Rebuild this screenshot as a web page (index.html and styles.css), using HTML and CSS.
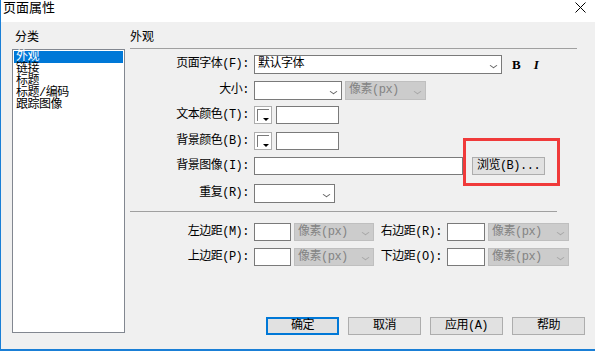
FILE: index.html
```html
<!DOCTYPE html>
<html lang="zh-CN">
<head>
    <meta charset="UTF-8">
    <title>页面属性</title>
    <link rel="stylesheet" href="styles.css">
</head>
<body>
    <div class="window">
        <div class="titlebar">
            <span class="title">页面属性</span>
            <svg class="close" width="11" height="11" viewBox="0 0 11 11">
                <path d="M0.5 0.5 L10.5 10.5 M10.5 0.5 L0.5 10.5" stroke="#000" stroke-width="1"/>
            </svg>
        </div>

        <div class="content">
            <div class="sidebar">
                <div class="heading">分类</div>
                <ul class="list">
                    <li class="selected">外观</li>
                    <li>链接</li>
                    <li>标题</li>
                    <li>标题/编码</li>
                    <li>跟踪图像</li>
                </ul>
            </div>

            <div class="panel">
                <div class="heading">外观</div>
                <div class="rule rule-top"></div>

                <div class="form">
                    <label>页面字体(F):</label>
                    <div class="row">
                        <div class="select font-select">默认字体<span class="arrow"></span></div>
                        <span class="bold">B</span>
                        <span class="italic">I</span>
                    </div>

                    <label>大小:</label>
                    <div class="row">
                        <div class="select size-select"><span class="arrow"></span></div>
                        <div class="select disabled unit-select">像素(px)<span class="arrow"></span></div>
                    </div>

                    <label>文本颜色(T):</label>
                    <div class="row">
                        <span class="swatch"><span class="tri"></span></span>
                        <input type="text" class="color-input">
                    </div>

                    <label>背景颜色(B):</label>
                    <div class="row">
                        <span class="swatch"><span class="tri"></span></span>
                        <input type="text" class="color-input">
                    </div>

                    <label>背景图像(I):</label>
                    <div class="row">
                        <input type="text" class="image-input">
                        <div class="browse-wrap">
                            <button class="btn browse">浏览(B)...</button>
                        </div>
                    </div>

                    <label>重复(R):</label>
                    <div class="row">
                        <div class="select repeat-select"><span class="arrow"></span></div>
                    </div>
                </div>

                <div class="rule rule-mid"></div>

                <div class="margins">
                    <label>左边距(M):</label>
                    <input type="text" class="margin-input">
                    <div class="select disabled">像素(px)<span class="arrow"></span></div>
                    <label>右边距(R):</label>
                    <input type="text" class="margin-input">
                    <div class="select disabled">像素(px)<span class="arrow"></span></div>

                    <label>上边距(P):</label>
                    <input type="text" class="margin-input">
                    <div class="select disabled">像素(px)<span class="arrow"></span></div>
                    <label>下边距(O):</label>
                    <input type="text" class="margin-input">
                    <div class="select disabled">像素(px)<span class="arrow"></span></div>
                </div>

                <div class="buttons">
                    <button class="btn default">确定</button>
                    <button class="btn">取消</button>
                    <button class="btn">应用(A)</button>
                    <button class="btn">帮助</button>
                </div>
            </div>
        </div>
    </div>
</body>
</html>
```

FILE: styles.css
```css
* {
    box-sizing: border-box;
}

body {
    margin: 0;
    font-family: "Liberation Mono", "Noto Sans CJK SC", monospace;
    font-size: 12px;
    color: #000;
    background: #fff;
}

.window {
    width: 595px;
    height: 351px;
    border-left: 1px solid #1a7fd6;
    border-bottom: 2px solid #1a7fd6;
    display: flex;
    flex-direction: column;
}

.titlebar {
    height: 22px;
    background: #fff;
    display: flex;
    align-items: center;
    justify-content: space-between;
    padding: 0 9px 0 2px;
}

.title {
    font-size: 13px;
    line-height: 16px;
    margin-top: -5px;
}

.close {
    margin-top: -8px;
}

.content {
    flex: 1;
    background: #f0f0f0;
    display: flex;
    padding-top: 9px;
}

.heading {
    height: 14px;
    line-height: 14px;
    padding-left: 3px;
}

.sidebar {
    width: 129px;
    padding-left: 11px;
}

.sidebar .heading {
    margin-bottom: 4px;
}

.list {
    list-style: none;
    margin: 0;
    padding: 1px;
    width: 113px;
    height: 284px;
    background: #fff;
    border: 1px solid #828790;
}

.list li {
    height: 12px;
    line-height: 12px;
    padding-left: 2px;
    letter-spacing: -0.5px;
}

.list li.selected {
    background: #0078d7;
    color: #fff;
}

.panel {
    flex: 1;
    display: flex;
    flex-direction: column;
    padding-bottom: 14px;
}

.panel .heading {
    padding-left: 0;
    margin-bottom: 3px;
}

.rule {
    height: 1px;
    background: #a0a0a0;
}

.rule-top {
    width: 447px;
    margin-bottom: 6px;
}

.rule-mid {
    width: 427px;
    margin-top: 8px;
    margin-bottom: 11px;
}

label {
    text-align: right;
    padding-right: 2px;
    line-height: 18px;
    white-space: nowrap;
    letter-spacing: -0.5px;
}

.form {
    display: grid;
    grid-template-columns: 121px 1fr;
    grid-template-rows: 26px 25px 26px 25px 27px 19px;
    column-gap: 3px;
    align-items: start;
}

.row {
    display: flex;
    align-items: center;
    position: relative;
}

.select {
    position: relative;
    height: 19px;
    line-height: 17px;
    padding-left: 3px;
    background: #fff;
    border: 1px solid #7a7a7a;
    letter-spacing: -0.5px;
}

.select .arrow {
    position: absolute;
    right: 5px;
    top: 7px;
    width: 5px;
    height: 5px;
    border-right: 1px solid #606060;
    border-bottom: 1px solid #606060;
    transform: scale(1.1, 0.8) rotate(45deg);
}

.select.disabled {
    background: #cccccc;
    border-color: #bfbfbf;
    color: #838383;
    height: 19px;
}

.select.disabled .arrow {
    border-color: #a6a6a6;
}

.font-select {
    width: 248px;
}

.bold,
.italic {
    font-family: "Liberation Serif", serif;
    font-weight: bold;
    font-size: 13px;
    line-height: 19px;
}

.bold {
    margin-left: 10px;
}

.italic {
    font-style: italic;
    margin-left: 13px;
}

.size-select {
    width: 88px;
}

.unit-select {
    width: 81px;
    margin-left: 3px;
}

.repeat-select {
    width: 81px;
}

input[type="text"] {
    height: 18px;
    border: 1px solid #7a7a7a;
    background: #fff;
    margin: 0;
    padding: 0;
    font: inherit;
}

.swatch {
    position: relative;
    width: 18px;
    height: 18px;
    border: 1px solid #adadad;
    background: #fff;
}

.swatch::before {
    content: "";
    position: absolute;
    left: 2px;
    top: 2px;
    width: 11px;
    height: 11px;
    border-top: 1px solid #7a7a7a;
    border-left: 1px solid #7a7a7a;
}

.swatch .tri {
    position: absolute;
    right: 2px;
    bottom: 2px;
    width: 0;
    height: 0;
    border-left: 3px solid transparent;
    border-right: 3px solid transparent;
    border-top: 3px solid #000;
}

.color-input {
    width: 63px;
    margin-left: 4px !important;
}

.image-input {
    width: 209px;
}

.browse-wrap {
    position: absolute;
    left: 209px;
    top: -19px;
    width: 97px;
    height: 48px;
    border: 3px solid #f03a3a;
    padding: 16px 0 0 6px;
}

.btn {
    height: 18px;
    padding: 0;
    font: inherit;
    line-height: 16px;
    background: #e1e1e1;
    border: 1px solid #adadad;
    color: #000;
    letter-spacing: -0.5px;
}

.browse {
    width: 73px;
}

.margins {
    display: grid;
    grid-template-columns: 121px 37px 80px 67px 38px 81px;
    grid-template-rows: 25px 18px;
    column-gap: 3px;
    align-items: start;
}

.margins .select {
    height: 18px;
    line-height: 16px;
}

.margins .select .arrow {
    top: 6px;
}

.margin-input {
    width: 100%;
}

.buttons {
    margin-top: auto;
    display: flex;
    justify-content: flex-end;
    gap: 9px;
    padding-right: 10px;
}

.buttons .btn {
    width: 73px;
}

.btn.default {
    border: 2px solid #0078d7;
    line-height: 14px;
}
```
